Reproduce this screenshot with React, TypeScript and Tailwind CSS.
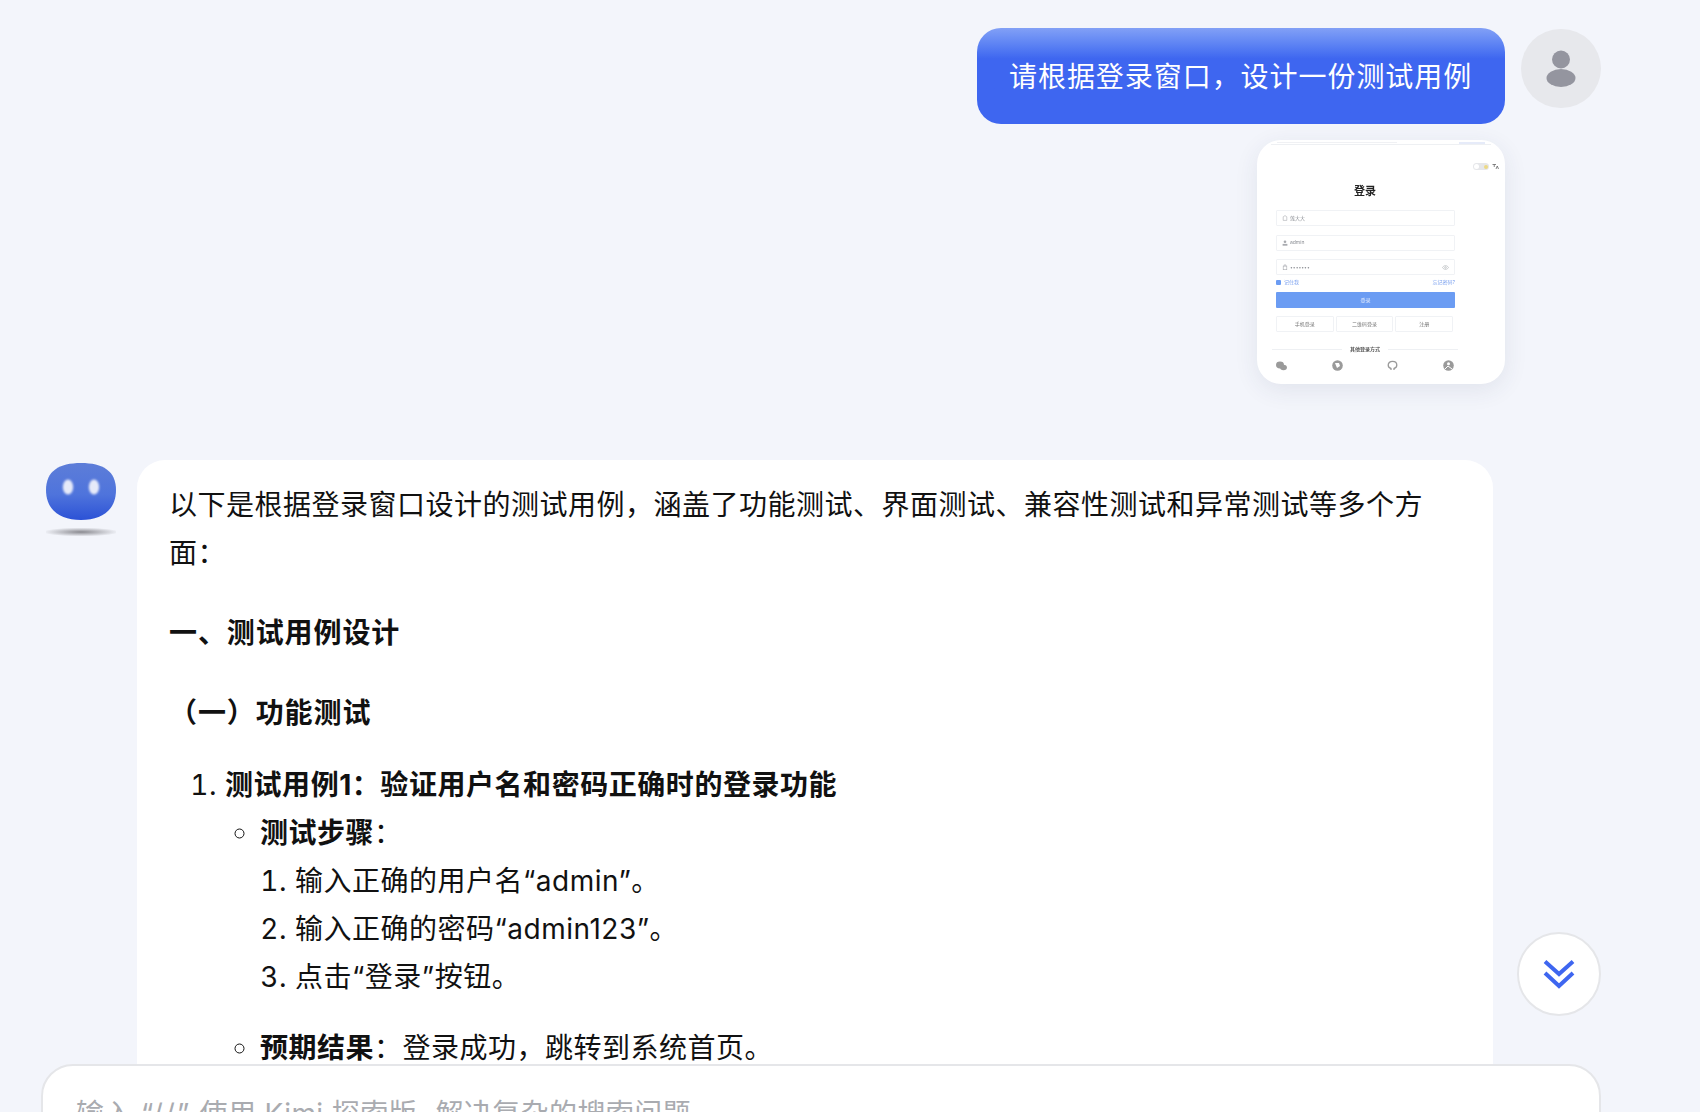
import React from "react";

const font = "font-['Inter','Noto_Sans_CJK_SC',sans-serif]";

function UserIcon() {
  return (
    <svg width="32" height="38" viewBox="0 0 32 38" fill="#94959f">
      <ellipse cx="16" cy="9.5" rx="9" ry="9" />
      <ellipse cx="16" cy="28" rx="14.5" ry="9" />
    </svg>
  );
}

function Mascot() {
  return (
    <svg width="70" height="76" viewBox="0 0 70 76">
      <defs>
        <linearGradient id="mb" x1="0" y1="0" x2="0" y2="1">
          <stop offset="0" stopColor="#5d7dd8" />
          <stop offset="0.55" stopColor="#4f74dc" />
          <stop offset="1" stopColor="#2c52d6" />
        </linearGradient>
        <radialGradient id="ms">
          <stop offset="0" stopColor="#8a8a90" />
          <stop offset="1" stopColor="#f3f5fb" />
        </radialGradient>
        <filter id="mf" x="-50%" y="-50%" width="200%" height="200%">
          <feGaussianBlur stdDeviation="0.8" />
        </filter>
      </defs>
      <path d="M35 0C57 0 70 8 70 27C70 47 56 57 35 57C14 57 0 47 0 27C0 8 13 0 35 0Z" fill="url(#mb)" />
      <ellipse cx="22" cy="24" rx="5.2" ry="7.6" fill="#e6eaf9" filter="url(#mf)" />
      <ellipse cx="48" cy="24" rx="5.2" ry="7.6" fill="#e6eaf9" filter="url(#mf)" />
      <ellipse cx="35" cy="69" rx="38" ry="4.5" fill="url(#ms)" />
    </svg>
  );
}

function MiniField({ icon, text, eye }: { icon: React.ReactNode; text: string; eye?: boolean }) {
  return (
    <div className="flex h-[16px] w-[179px] items-center gap-[2px] rounded-[1px] border border-[#f0f2f5] px-[5px] text-[5px] leading-none text-[#8a8d93]">
      {icon}
      <span className="flex-1">{text}</span>
      {eye && (
        <svg width="7" height="5" viewBox="0 0 14 10" fill="none" stroke="#b5b7bc" strokeWidth="1.4">
          <path d="M1 5c3-5 9-5 12 0c-3 5-9 5-12 0Z" />
          <circle cx="7" cy="5" r="1.6" />
        </svg>
      )}
    </div>
  );
}

function Thumbnail() {
  const ic = "#a8aaaf";
  return (
    <div className="flex h-[244px] w-[248px] flex-col overflow-hidden rounded-[24px] bg-white shadow-[0_6px_24px_rgba(40,50,90,0.09)]">
      <div className="mx-[14px] mt-[2px] flex h-[3px] justify-between border-b border-[#eef0f3]">
        <div className="ml-[6px] h-[1px] w-[120px] bg-[#f0f1f4]" />
        <div className="mr-[6px] h-[2px] w-[26px] bg-[#e6ebf9]" />
      </div>
      <div className="flex flex-col blur-[0.4px]">
        <div className="mt-[18px] flex items-center justify-end gap-[3px] pr-[6px]">
          <div className="flex h-[7px] w-[16px] items-center justify-between rounded-full bg-[#e6e7ea] px-[1px]">
            <div className="h-[5px] w-[5px] rounded-full bg-white" />
            <div className="h-[4px] w-[4px] rounded-full bg-[#ecd986]" />
          </div>
          <svg width="7" height="7" viewBox="0 0 14 14" fill="none" stroke="#666" strokeWidth="1.6">
            <path d="M1 3h7M4.5 3v5M8 12l2.5-6l2.5 6" />
          </svg>
        </div>
        <div className="mt-[14px] w-[216px] text-center text-[11px] font-bold leading-[14px] text-[#222]">登录</div>
        <div className="ml-[19px] mt-[12px] flex w-[179px] flex-col gap-[8.5px]">
          <MiniField
            text="莲大大"
            icon={
              <svg width="6" height="6" viewBox="0 0 10 10" fill="none" stroke={ic}>
                <path d="M2 9V3l3-2l3 2v6Z" />
              </svg>
            }
          />
          <MiniField
            text="admin"
            icon={
              <svg width="6" height="6" viewBox="0 0 10 10" fill={ic}>
                <circle cx="5" cy="3" r="2.2" />
                <rect x="1" y="6.5" width="8" height="3" />
              </svg>
            }
          />
          <MiniField
            text="•••••••"
            eye
            icon={
              <svg width="6" height="6" viewBox="0 0 10 10" fill="none" stroke={ic}>
                <rect x="2" y="3.5" width="6" height="6" />
                <path d="M3.5 3.5V1.5h3v2" />
              </svg>
            }
          />
        </div>
        <div className="mb-[4px] ml-[19px] mt-[2px] flex h-[11px] w-[179px] items-center text-[5px] leading-none text-[#7ea3ef]">
          <div className="mr-[3px] flex h-[5px] w-[5px] items-center justify-center rounded-[1px] bg-[#6b9cf3]" />
          <span className="flex-1">记住我</span>
          <span>忘记密码?</span>
        </div>
        <div className="ml-[19px] flex h-[16px] w-[179px] items-center justify-center rounded-[1px] bg-[#6b9cf3] text-[5px] leading-none text-[#e8effd]">
          登录
        </div>
        <div className="ml-[19px] mt-[8px] flex w-[177px] gap-[2px] text-[5px] leading-none text-[#777]">
          {["手机登录", "二维码登录", "注册"].map((t) => (
            <div key={t} className="flex h-[16px] flex-1 items-center justify-center rounded-[1px] border border-[#f0f2f5]">
              {t}
            </div>
          ))}
        </div>
        <div className="ml-[15px] mt-[15px] flex w-[186px] items-center gap-[8px] text-[5px] font-bold leading-none text-[#555]">
          <div className="h-[1px] flex-1 bg-[#eef0f3]" />
          <span>其他登录方式</span>
          <div className="h-[1px] flex-1 bg-[#eef0f3]" />
        </div>
        <div className="ml-[19px] mt-[8px] flex w-[178px] items-center justify-between">
          <svg width="11" height="10" viewBox="0 0 11 10" fill="#9a9a9a">
            <ellipse cx="4" cy="4" rx="4" ry="3.4" />
            <ellipse cx="7.5" cy="6.5" rx="3.4" ry="2.8" />
          </svg>
          <svg width="11" height="11" viewBox="0 0 11 11">
            <circle cx="5.5" cy="5.5" r="5.3" fill="#9a9a9a" />
            <path d="M3 3h4l1 3l-3 2Z" fill="#fff" />
          </svg>
          <svg width="11" height="11" viewBox="0 0 11 11" fill="none" stroke="#9a9a9a" strokeWidth="1.3">
            <path d="M4 10V8.5C2 8 1.2 6.8 1.2 5C1.2 2.8 3 1.4 5.5 1.4S9.8 2.8 9.8 5C9.8 6.8 9 8 7 8.5V10" />
          </svg>
          <svg width="11" height="11" viewBox="0 0 11 11">
            <circle cx="5.5" cy="5.5" r="5.3" fill="#9a9a9a" />
            <circle cx="5.5" cy="3.8" r="1.5" fill="#fff" />
            <path d="M2 9l3-3l4 3" fill="none" stroke="#fff" />
          </svg>
        </div>
      </div>
    </div>
  );
}

export default function App() {
  return (
    <div className={`relative flex h-[1112px] w-[1700px] flex-col overflow-hidden bg-[#f3f5fb] pt-[28px] text-[#111] ${font}`}>
      <div className="flex justify-end gap-[16px] pr-[99px]">
        <div className="flex h-[96px] w-[528px] items-center whitespace-nowrap rounded-[24px] bg-gradient-to-b from-[#82a0f6] via-[#3e66f0] via-[32%] to-[#3e66f0] pl-[32px] pt-[2px] text-[28px] leading-[48px] tracking-[0.95px] text-white">
          请根据登录窗口，设计一份测试用例
        </div>
        <div className="mt-[1px] flex h-[79px] w-[80px] items-center justify-center rounded-full bg-[#e7e8ec]">
          <UserIcon />
        </div>
      </div>
      <div className="mt-[16px] flex justify-end pr-[195px]">
        <Thumbnail />
      </div>
      <div className="mt-[76px] flex gap-[21px] pl-[46px]">
        <div className="pt-[3px]">
          <Mascot />
        </div>
        <div className="w-[1356px] rounded-t-[28px] bg-white pl-[32px] pr-[33px] pt-[21px] text-[28px] leading-[48px] tracking-[0.5px]">
          <p>以下是根据登录窗口设计的测试用例，涵盖了功能测试、界面测试、兼容性测试和异常测试等多个方面：</p>
          <p className="mt-[32px] font-bold tracking-[0.9px]">一、测试用例设计</p>
          <p className="mt-[32px] font-bold tracking-[0.9px]">（一）功能测试</p>
          <ol className="mt-[24px] list-decimal pl-[56px]">
            <li className="font-bold [&::marker]:font-normal">
              <span className="tracking-[0.55px]">测试用例1：验证用户名和密码正确时的登录功能</span>
              <ul className="list-[circle] pl-[35px] font-normal">
                <li>
                  <span className="font-bold">测试步骤</span>：
                  <ol className="list-decimal pl-[35px]">
                    <li>输入正确的用户名“admin”。</li>
                    <li>输入正确的密码“admin123”。</li>
                    <li>点击“登录”按钮。</li>
                  </ol>
                </li>
                <li className="mt-[23px]">
                  <span className="font-bold">预期结果</span>：登录成功，跳转到系统首页。
                </li>
              </ul>
            </li>
          </ol>
        </div>
      </div>

      <button className="absolute left-[1517px] top-[932px] flex h-[84px] w-[84px] items-center justify-center rounded-full border-2 border-[#e5e6e9] bg-white pt-[1px]">
        <svg width="32" height="31" viewBox="0 0 32 31" fill="none" stroke="#3e66f0" strokeWidth="4">
          <path d="M2 2.5L16 15L30 2.5" />
          <path d="M2 14L16 27L30 14" />
        </svg>
      </button>

      <div className="absolute left-[41px] top-[1064px] h-[120px] w-[1560px] rounded-[32px] border-2 border-[#e5e6e9] bg-white pl-[33px] pt-[24px] text-[28px] leading-[48px] tracking-[0.4px] text-[#a9abb0]">
        输入 <span className="tracking-[2px]">“//”</span> 使用 Kimi 探索版，<span className="-ml-[10px]">解决复杂的搜索问题</span>
      </div>
    </div>
  );
}
